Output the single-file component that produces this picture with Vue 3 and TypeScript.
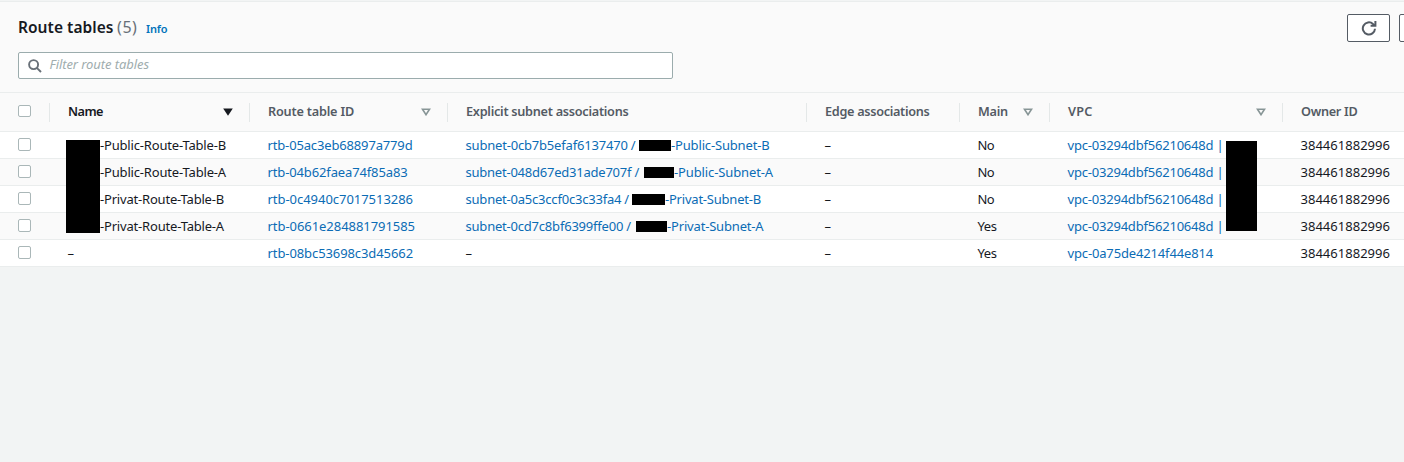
<script setup lang="ts">
import type { Directive } from 'vue'

interface Part {
  text: string
  width: number
}

interface Subnet {
  id: Part
  lead: number
  mask: number
  tail: Part
}

interface RouteTable {
  name: Part
  id: Part
  subnet: Subnet | null
  main: Part
  vpc: Part
}

interface Column {
  key: string
  label: string
  width: number
  sort?: 'active' | 'idle'
}

// Tracks a run of text so that it fills the given width in pixels.
const vFit: Directive<HTMLElement, number> = {
  mounted(el, { value }) {
    const count = (el.textContent ?? '').length
    if (count < 2) return
    const natural = el.getBoundingClientRect().width
    el.style.letterSpacing = `${(value - natural) / count}px`
  },
}

const columns: Column[] = [
  { key: 'name', label: 'Name', width: 35, sort: 'active' },
  { key: 'id', label: 'Route table ID', width: 86, sort: 'idle' },
  { key: 'subnet', label: 'Explicit subnet associations', width: 162.5 },
  { key: 'edge', label: 'Edge associations', width: 104.5 },
  { key: 'main', label: 'Main', width: 30, sort: 'idle' },
  { key: 'vpc', label: 'VPC', width: 24.5, sort: 'idle' },
  { key: 'owner', label: 'Owner ID', width: 56.5 },
]

const sharedVpc: Part = { text: 'vpc-03294dbf56210648d |', width: 156 }
const no: Part = { text: 'No', width: 16.5 }
const yes: Part = { text: 'Yes', width: 19 }

const rows: RouteTable[] = [
  {
    name: { text: '-Public-Route-Table-B', width: 126 },
    id: { text: 'rtb-05ac3eb68897a779d', width: 145 },
    subnet: {
      id: { text: 'subnet-0cb7b5efaf6137470 /', width: 170 },
      lead: 173.5, mask: 32,
      tail: { text: '-Public-Subnet-B', width: 98.5 },
    },
    main: no,
    vpc: sharedVpc,
  },
  {
    name: { text: '-Public-Route-Table-A', width: 126 },
    id: { text: 'rtb-04b62faea74f85a83', width: 140 },
    subnet: {
      id: { text: 'subnet-048d67ed31ade707f /', width: 173.5 },
      lead: 178.5, mask: 30,
      tail: { text: '-Public-Subnet-A', width: 99 },
    },
    main: no,
    vpc: sharedVpc,
  },
  {
    name: { text: '-Privat-Route-Table-B', width: 124 },
    id: { text: 'rtb-0c4940c7017513286', width: 145.5 },
    subnet: {
      id: { text: 'subnet-0a5c3ccf0c3c33fa4 /', width: 163.5 },
      lead: 166.5, mask: 33,
      tail: { text: '-Privat-Subnet-B', width: 96 },
    },
    main: no,
    vpc: sharedVpc,
  },
  {
    name: { text: '-Privat-Route-Table-A', width: 124 },
    id: { text: 'rtb-0661e284881791585', width: 147.5 },
    subnet: {
      id: { text: 'subnet-0cd7c8bf6399ffe00 /', width: 165.5 },
      lead: 170.5, mask: 31,
      tail: { text: '-Privat-Subnet-A', width: 96.5 },
    },
    main: yes,
    vpc: sharedVpc,
  },
  {
    name: { text: '–', width: 7 },
    id: { text: 'rtb-08bc53698c3d45662', width: 145.5 },
    subnet: null,
    main: yes,
    vpc: { text: 'vpc-0a75de4214f44e814', width: 145.5 },
  },
]
</script>

<template>
  <main class="panel">
    <header class="toolbar">
      <div class="heading">
        <h1><span v-fit="95.5">Route tables</span></h1>
        <span class="count"><span v-fit="20.5">(5)</span></span>
        <a class="info"><span v-fit="21.5">Info</span></a>
      </div>
      <div class="actions">
        <button class="btn" aria-label="Refresh">
          <svg width="16" height="16" viewBox="0 0 16 16" fill="none" stroke="#545b64" stroke-width="2">
            <path d="M14 8.8A6.1 6.1 0 1 1 12 3.9L13.8 5.4" />
            <path d="M14.4 1V5.8H9.6" />
          </svg>
        </button>
        <button class="btn" aria-label="Actions"></button>
      </div>
      <div class="filter">
        <svg width="14" height="14" viewBox="0 0 14 14" fill="none" stroke="#687078" stroke-width="1.9">
          <circle cx="5.6" cy="5.6" r="4.5" />
          <path d="M8.8 8.8L13 13" />
        </svg>
        <span class="placeholder"><span v-fit="99.5">Filter route tables</span></span>
      </div>
    </header>

    <section class="table">
      <div class="row head">
        <div class="cell select"><i class="box"></i></div>
        <div v-for="c in columns" :key="c.key" class="cell" :class="[c.key, { sorted: c.sort === 'active' }]">
          <span v-fit="c.width">{{ c.label }}</span>
          <svg v-if="c.sort" class="sort" width="10" height="8" viewBox="0 0 10 8">
            <path v-if="c.sort === 'active'" d="M0.2 0.5H9.8L5 7.8Z" fill="#16191f" />
            <path v-else d="M1.5 1.3H8.5L5 6.7Z" fill="none" stroke="#879596" stroke-width="1.6" />
          </svg>
        </div>
      </div>
      <div v-for="r in rows" :key="r.id.text" class="row body">
        <div class="cell select"><i class="box"></i></div>
        <div class="cell name" :class="{ masked: r.subnet }"><span v-fit="r.name.width">{{ r.name.text }}</span></div>
        <div class="cell link"><span v-fit="r.id.width">{{ r.id.text }}</span></div>
        <div v-if="r.subnet" class="cell link">
          <div class="lead" :style="{ width: r.subnet.lead + 'px' }"><span v-fit="r.subnet.id.width">{{ r.subnet.id.text }}</span></div>
          <i class="mask" :style="{ width: r.subnet.mask + 'px' }"></i>
          <span v-fit="r.subnet.tail.width">{{ r.subnet.tail.text }}</span>
        </div>
        <div v-else class="cell">–</div>
        <div class="cell">–</div>
        <div class="cell"><span v-fit="r.main.width">{{ r.main.text }}</span></div>
        <div class="cell link"><span v-fit="r.vpc.width">{{ r.vpc.text }}</span></div>
        <div class="cell"><span v-fit="89.5">384461882996</span></div>
      </div>
      <i class="cover cover-name"></i>
      <i class="cover cover-vpc"></i>
    </section>
  </main>
</template>

<style>
html,
body {
  margin: 0;
  background: #f2f4f4;
  overflow: hidden;
}
</style>

<style scoped>
.panel {
  height: 462px;
  width: 1404px;
  overflow: hidden;
  box-sizing: border-box;
  padding-top: 1px;
  background: #f2f4f4;
  color: #16191f;
  font: 13px/20px 'Noto Sans', 'Open Sans', sans-serif;
  white-space: nowrap;
}
.toolbar {
  height: 92px;
  box-sizing: border-box;
  border-top: 1px solid #eaeded;
  border-bottom: 1px solid #eaeded;
  background: #fafafa;
  display: grid;
  grid-template: 50px 27px / 655px auto;
  justify-content: space-between;
  padding-left: 18px;
}
.heading {
  display: flex;
  align-items: baseline;
  padding-top: 13px;
}
h1 {
  margin: 0;
  width: 99px;
  font-size: 15.5px;
  line-height: 24px;
  font-weight: 600;
}
.count {
  width: 29px;
  font-size: 16px;
  color: #687078;
}
.info {
  font-size: 11px;
  font-weight: 600;
  color: #0073bb;
}
.actions {
  display: flex;
  gap: 9px;
  padding-top: 12px;
  width: 57px;
  overflow: hidden;
}
.btn {
  flex: none;
  width: 43px;
  height: 28px;
  padding: 0;
  border: 1px solid #545b64;
  border-radius: 2px;
  background: #fff;
  display: flex;
  align-items: center;
  justify-content: center;
}
.filter {
  grid-row: 2;
  box-sizing: border-box;
  border: 1px solid #9bacad;
  border-radius: 2px;
  background: #fff;
  display: flex;
  align-items: center;
  padding-left: 9px;
}
.placeholder {
  margin-left: 7.5px;
  margin-top: -3px;
  font-style: italic;
  color: #a0adae;
}
.table {
  position: relative;
}
.row {
  display: grid;
  grid-template-columns: 50px 200px 198px 359px 153px 90px 233px 121px;
  height: 27px;
  box-sizing: border-box;
  border-bottom: 1px solid #eaeded;
  background: #fff;
}
.row:nth-child(odd) {
  background: #fafafa;
}
.row:last-of-type {
  background: #fff;
}
.cell {
  display: flex;
  align-items: center;
  padding-left: 17.5px;
}
.head {
  height: 39px;
  color: #545b64;
  font-size: 12.7px;
  font-weight: 600;
}
.head .cell {
  height: 19px;
  margin-top: 10px;
  border-right: 1px solid #e4e8e8;
}
.head .cell > span,
.head .box {
  margin-top: -3px;
}
.head .sort {
  margin-top: -2px;
}
.head .owner {
  border-right: 0;
}
.head .cell:not(.select) {
  padding-left: 18px;
}
.sorted {
  color: #16191f;
}
.sort {
  margin-left: auto;
  margin-right: 16.5px;
}
.name {
  color: #16191f;
}
.masked {
  padding-left: 50px;
}
.link {
  color: #0b6cb5;
}
.cell.select {
  padding-left: 18px;
}
.box {
  width: 11px;
  height: 10px;
  border: 1px solid #aab7b8;
  border-radius: 2px;
  background: #fff;
}
.body .box {
  height: 11px;
  margin-top: -1px;
}
.mask {
  height: 11px;
  background: #000;
}
.cover {
  position: absolute;
  background: #000;
}
.cover-name {
  left: 66px;
  top: 47px;
  width: 34px;
  height: 93px;
}
.cover-vpc {
  left: 1226px;
  top: 48px;
  width: 31px;
  height: 90px;
}
</style>
